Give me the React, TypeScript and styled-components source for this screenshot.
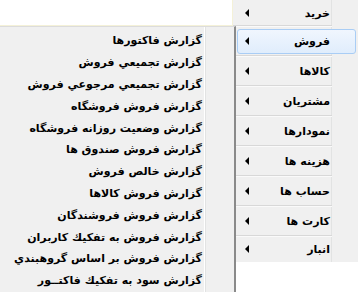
import React from "react";
import styled, { createGlobalStyle } from "styled-components";

const Global = createGlobalStyle`
  html, body { margin: 0; padding: 0; background: #ffffff; }
  body { width: 361px; height: 292px; overflow: hidden; font-family: "DejaVu Sans", sans-serif; }
`;

const Page = styled.div`
  display: flex;
  width: 361px;
  height: 292px;
  overflow: hidden;
`;

const LeftCol = styled.div`
  width: 236px;
  display: flex;
  flex-direction: column;
  position: relative;
  z-index: 2;
`;

const TopBox = styled.div`
  height: 26px;
  margin-right: 3px;
  background: #ffffff;
  border-right: 1px solid #f4f1d8;
  border-bottom: 1px solid #f4f1d8;
`;

const SubMenu = styled.div`
  flex: 1;
  background: #f0f0f0;
  border-top: 1px solid #dcdcdc;
  border-right: 2px solid #8a8a8a;
  padding-top: 3px;
  position: relative;
  direction: rtl;
`;

const Gutter = styled.div`
  position: absolute;
  top: 0;
  bottom: 0;
  right: 28px;
  width: 1px;
  background: #e2e3e3;
  box-shadow: -1px 0 0 #ffffff;
`;

const SubItem = styled.div`
  height: 21.8px;
  line-height: 21.8px;
  padding-right: 32px;
  font-size: 11px;
  font-weight: bold;
  color: #000;
  white-space: nowrap;
`;

const MainMenu = styled.div`
  width: 125px;
  margin-left: -3px;
  height: 262px;
  background: #f0f0f0;
  position: relative;
  direction: rtl;
  display: flex;
  flex-direction: column;
`;

const MainGutter = styled.div`
  position: absolute;
  top: 0;
  bottom: 0;
  right: 26px;
  width: 1px;
  background: #e2e3e3;
`;

const MainItem = styled.div<{ $h: number; $sel?: boolean; $last?: boolean }>`
  height: ${(p) => p.$h}px;
  display: flex;
  align-items: center;
  justify-content: space-between;
  position: relative;
  padding: 0 28px 0 12px;
  font-size: 11px;
  font-weight: bold;
  color: #000;
  &::after {
    content: "";
    display: ${(p) => (p.$last ? "none" : "block")};
    position: absolute;
    left: 0;
    right: 26px;
    bottom: 0;
    height: 1px;
    background: #d8d8d8;
    box-shadow: 0 1px 0 #fafafa;
  }
`;

const Highlight = styled.div`
  position: absolute;
  left: 4px;
  right: 2px;
  top: 3px;
  bottom: 2px;
  border: 1px solid #a9cdf5;
  border-radius: 3px;
  background: linear-gradient(#f0f6fe, #e0edfc);
  z-index: 0;
`;

const Label = styled.span`
  position: relative;
  z-index: 1;
`;

const Arrow = styled.span`
  position: relative;
  z-index: 1;
  width: 0;
  height: 0;
  border-top: 4px solid transparent;
  border-bottom: 4px solid transparent;
  border-right: 4px solid #000;
`;

const subItems = [
  "گزارش فاكتورها",
  "گزارش تجميعي فروش",
  "گزارش تجميعي مرجوعي فروش",
  "گزارش فروش فروشگاه",
  "گزارش وضعيت روزانه فروشگاه",
  "گزارش فروش صندوق ها",
  "گزارش خالص فروش",
  "گزارش فروش كالاها",
  "گزارش فروش فروشندگان",
  "گزارش فروش به تفكيك كاربران",
  "گزارش فروش بر اساس گروهبندي",
  "گزارش سود به تفكيك فاكتــور",
];

const mainItems = [
  "خريد",
  "فروش",
  "كالاها",
  "مشتريان",
  "نمودارها",
  "هزينه ها",
  "حساب ها",
  "كارت ها",
  "انبار",
];

export default function App() {
  return (
    <>
      <Global />
      <Page>
        <LeftCol>
          <TopBox />
          <SubMenu>
            <Gutter />
            {subItems.map((s) => (
              <SubItem key={s}>{s}</SubItem>
            ))}
          </SubMenu>
        </LeftCol>
        <MainMenu>
          <MainGutter />
          {mainItems.map((m, i) => (
            <MainItem
              key={m}
              $h={i === 0 || i === mainItems.length - 1 ? 26 : 30}
              $sel={i === 1}
              $last={i === mainItems.length - 1}
            >
              {i === 1 && <Highlight />}
              <Label>{m}</Label>
              <Arrow />
            </MainItem>
          ))}
        </MainMenu>
      </Page>
    </>
  );
}
